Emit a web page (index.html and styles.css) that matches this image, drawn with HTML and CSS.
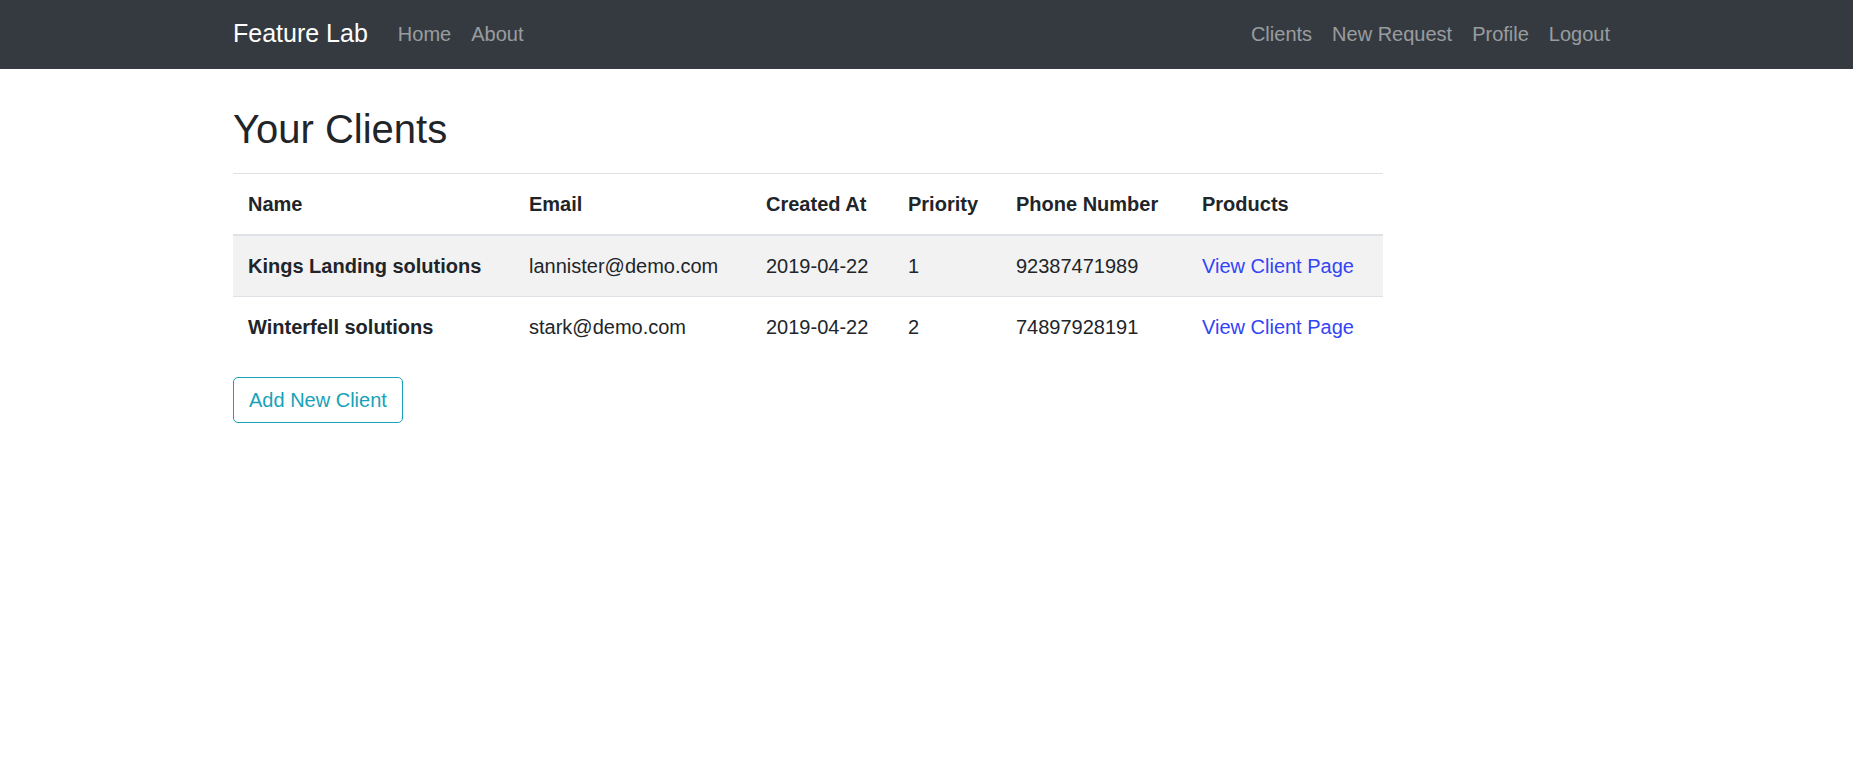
FILE: index.html
```html
<!DOCTYPE html>
<html lang="en">
<head>
<meta charset="utf-8">
<title>Feature Lab</title>
<link rel="stylesheet" href="styles.css">
</head>
<body>
<nav class="navbar">
  <div class="container nav-inner">
    <a class="brand" href="#">Feature Lab</a>
    <ul class="nav">
      <li><a class="nav-link" href="#">Home</a></li>
      <li><a class="nav-link" href="#">About</a></li>
    </ul>
    <ul class="nav nav-right">
      <li><a class="nav-link" href="#">Clients</a></li>
      <li><a class="nav-link" href="#">New Request</a></li>
      <li><a class="nav-link" href="#">Profile</a></li>
      <li><a class="nav-link" href="#">Logout</a></li>
    </ul>
  </div>
</nav>
<main class="container content">
  <h2 class="title">Your Clients</h2>
  <table class="table">
    <colgroup>
      <col class="c-name"><col class="c-email"><col class="c-created"><col class="c-priority"><col class="c-phone"><col class="c-products">
    </colgroup>
    <thead>
      <tr><th>Name</th><th>Email</th><th>Created At</th><th>Priority</th><th>Phone Number</th><th>Products</th></tr>
    </thead>
    <tbody>
      <tr class="striped"><th>Kings Landing solutions</th><td>lannister@demo.com</td><td>2019-04-22</td><td>1</td><td>92387471989</td><td><a class="link" href="#">View Client Page</a></td></tr>
      <tr><th>Winterfell solutions</th><td>stark@demo.com</td><td>2019-04-22</td><td>2</td><td>74897928191</td><td><a class="link" href="#">View Client Page</a></td></tr>
    </tbody>
  </table>
  <a class="btn-outline" href="#">Add New Client</a>
</main>
</body>
</html>
```

FILE: styles.css
```css
* { box-sizing: border-box; }
html, body { margin: 0; padding: 0; }
body {
  font-family: "Liberation Sans", Arial, sans-serif;
  font-size: 20px;
  line-height: 1.5;
  color: #212529;
  background: #fff;
}
a { text-decoration: none; }
.container {
  width: 1425px;
  margin: 0 auto;
  padding: 0 19px;
}
.navbar {
  background: #343a40;
  padding: 9px 0 11px;
}
.nav-inner {
  display: flex;
  align-items: center;
}
.brand {
  color: #fff;
  font-size: 25px;
  line-height: 37px;
  padding: 6px 0;
  margin-right: 20px;
}
.nav {
  display: flex;
  list-style: none;
  margin: 0;
  padding: 0;
}
.nav-right { margin-left: auto; }
.nav-link {
  display: block;
  color: rgba(255,255,255,.5);
  padding: 9px 10px;
  line-height: 30px;
}
.content { padding-top: 36px; }
.title {
  font-size: 40px;
  font-weight: 400;
  line-height: 1.2;
  margin: 0 0 20px;
}
.table {
  width: 1150px;
  table-layout: fixed;
  border-collapse: collapse;
  margin-bottom: 20px;
}
.c-name { width: 281px; }
.c-email { width: 237px; }
.c-created { width: 142px; }
.c-priority { width: 108px; }
.c-phone { width: 186px; }
.c-products { width: 196px; }
.table th, .table td {
  padding: 15px;
  text-align: left;
  vertical-align: top;
  border-top: 1px solid #dee2e6;
  white-space: nowrap;
}
.table thead th {
  border-bottom: 2px solid #dee2e6;
  font-weight: 700;
}
.table tbody th { font-weight: 700; }
.striped { background: #f2f2f2; }
.link { color: #3344f5; }
.btn-outline {
  display: inline-block;
  color: #17a2b8;
  border: 1px solid #17a2b8;
  border-radius: 5px;
  padding: 7px 15px;
  line-height: 30px;
}
```
